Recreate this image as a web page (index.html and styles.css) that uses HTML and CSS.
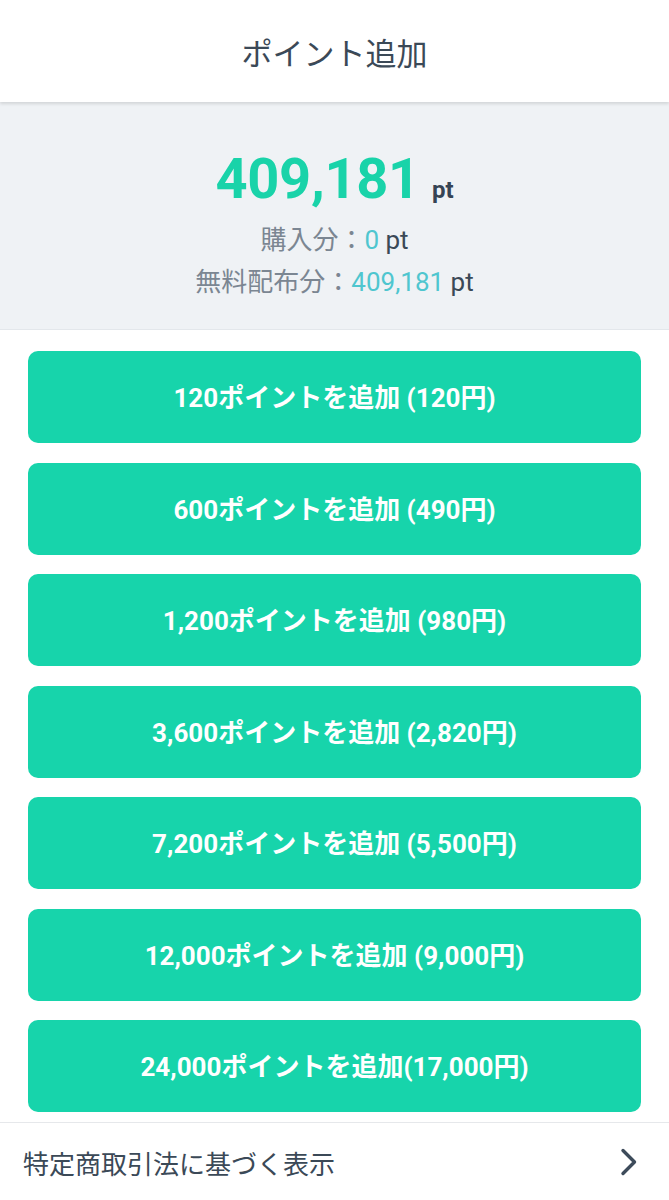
FILE: index.html
```html
<!DOCTYPE html>
<html lang="ja">
<head>
  <meta charset="UTF-8" />
  <meta name="viewport" content="width=device-width, initial-scale=1" />
  <title>ポイント追加</title>
  <link rel="stylesheet" href="styles.css">
</head>
<body>
  <header class="top-bar">
    <h1>ポイント追加</h1>
  </header>

  <section class="balance">
    <div class="balance-total">
      <span class="total-num">409,181</span><span class="total-unit">pt</span>
    </div>
    <p class="balance-line">購入分：<span class="val">0</span> <span class="unit">pt</span></p>
    <p class="balance-line">無料配布分：<span class="val">409,181</span> <span class="unit">pt</span></p>
  </section>

  <div class="plans">
    <button class="plan-btn">120ポイントを追加 (120円)</button>
    <button class="plan-btn">600ポイントを追加 (490円)</button>
    <button class="plan-btn">1,200ポイントを追加 (980円)</button>
    <button class="plan-btn">3,600ポイントを追加 (2,820円)</button>
    <button class="plan-btn">7,200ポイントを追加 (5,500円)</button>
    <button class="plan-btn">12,000ポイントを追加 (9,000円)</button>
    <button class="plan-btn">24,000ポイントを追加(17,000円)</button>
  </div>

  <a class="law-link" href="#">
    <span>特定商取引法に基づく表示</span>
    <svg class="chevron" width="20" height="30" viewBox="0 0 20 30">
      <path d="M4 3.5 L15.5 15 L4 26.5" fill="none" stroke="#3d4b5a" stroke-width="3.4" stroke-linecap="round" stroke-linejoin="round" />
    </svg>
  </a>
</body>
</html>
```

FILE: styles.css
```css
body {
  margin: 0;
  font-family: Roboto, "Noto Sans CJK JP", sans-serif;
  background: #fff;
  color: #3b4957;
}
.top-bar {
  height: 102px;
  display: flex;
  align-items: center;
  justify-content: center;
  background: #fff;
  box-shadow: 0 2px 3px rgba(0, 0, 0, 0.12);
  position: relative;
  z-index: 1;
}
.top-bar h1 {
  margin: 0;
  font-size: 31px;
  font-weight: 400;
  color: #3b4957;
}
.balance {
  background: #eff2f5;
  height: 228px;
  box-sizing: border-box;
  padding-top: 42px;
  text-align: center;
  border-bottom: 1px solid #e3e7eb;
}
.balance-total {
  line-height: 70px;
  height: 75px;
}
.total-num {
  font-size: 56px;
  font-weight: 700;
  color: #19d3a9;
  letter-spacing: -0.3px;
}
.total-unit {
  font-size: 24px;
  font-weight: 700;
  color: #364454;
  margin-left: 12px;
}
.balance-line {
  margin: 0;
  font-size: 26px;
  line-height: 42px;
  color: #7b8692;
}
.balance-line .val {
  color: #4fc6cf;
}
.balance-line .unit {
  color: #3b4957;
}
.plans {
  display: flex;
  flex-direction: column;
  gap: 19.5px;
  padding: 21px 28px 10px;
}
.plan-btn {
  height: 92px;
  padding: 0 0 3px;
  border: none;
  border-radius: 10px;
  background: #17d4ab;
  color: #fff;
  font-family: Roboto, "Noto Sans CJK JP", sans-serif;
  font-size: 26px;
  font-weight: 700;
  cursor: pointer;
}
.law-link {
  display: flex;
  align-items: center;
  justify-content: space-between;
  height: 78px;
  padding: 0 30px 0 23px;
  border-top: 1px solid #e6e8eb;
  color: #3b4957;
  text-decoration: none;
  font-size: 26px;
}
```
